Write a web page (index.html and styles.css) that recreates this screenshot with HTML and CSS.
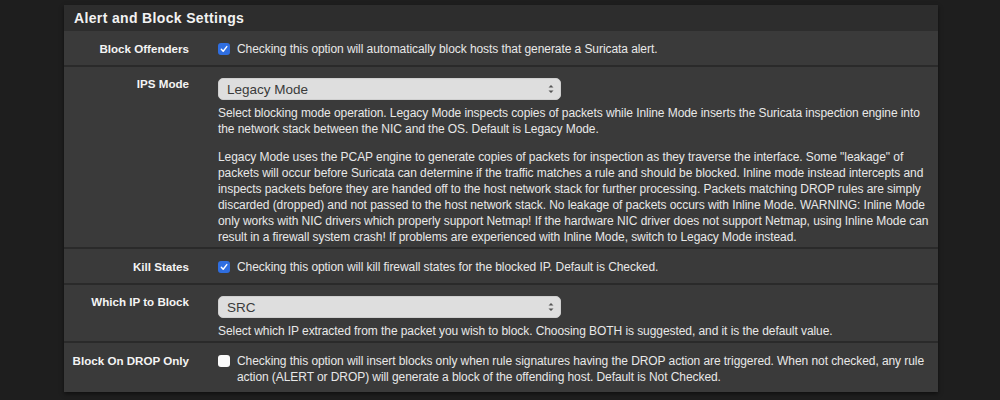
FILE: index.html
```html
<!DOCTYPE html>
<html>
<head>
<meta charset="utf-8">
<link rel="stylesheet" href="styles.css">
</head>
<body>
<div class="panel">
  <div class="panel-heading">Alert and Block Settings</div>
  <div class="row">
    <div class="label">Block Offenders</div>
    <div class="control">
      <label class="check"><span class="box on"><svg viewBox="0 0 12 12" width="12" height="12"><path d="M3.3 6.3 L5.2 8.3 L8.8 3.6" fill="none" stroke="#fff" stroke-width="1.4" stroke-linecap="round" stroke-linejoin="round"/></svg></span><span>Checking this option will automatically block hosts that generate a Suricata alert.</span></label>
    </div>
  </div>
  <div class="row row-select">
    <div class="label">IPS Mode</div>
    <div class="control">
      <div class="select-wrap">
        <select class="select"><option>Legacy Mode</option></select>
        <svg class="arrows" viewBox="0 0 8 12" width="8" height="12"><path d="M1.5 4.5 L4 2 L6.5 4.5 Z M1.5 7.5 L4 10 L6.5 7.5 Z" fill="#555"/></svg>
      </div>
      <p class="help">Select blocking mode operation. Legacy Mode inspects copies of packets while Inline Mode inserts the Suricata inspection engine into the network stack between the NIC and the OS. Default is Legacy Mode.</p>
      <p class="help para">Legacy Mode uses the PCAP engine to generate copies of packets for inspection as they traverse the interface. Some "leakage" of packets will occur before Suricata can determine if the traffic matches a rule and should be blocked. Inline mode instead intercepts and inspects packets before they are handed off to the host network stack for further processing. Packets matching DROP rules are simply discarded (dropped) and not passed to the host network stack. No leakage of packets occurs with Inline Mode. WARNING: Inline Mode only works with NIC drivers which properly support Netmap! If the hardware NIC driver does not support Netmap, using Inline Mode can result in a firewall system crash! If problems are experienced with Inline Mode, switch to Legacy Mode instead.</p>
    </div>
  </div>
  <div class="row">
    <div class="label">Kill States</div>
    <div class="control">
      <label class="check"><span class="box on"><svg viewBox="0 0 12 12" width="12" height="12"><path d="M3.3 6.3 L5.2 8.3 L8.8 3.6" fill="none" stroke="#fff" stroke-width="1.4" stroke-linecap="round" stroke-linejoin="round"/></svg></span><span>Checking this option will kill firewall states for the blocked IP. Default is Checked.</span></label>
    </div>
  </div>
  <div class="row row-select">
    <div class="label">Which IP to Block</div>
    <div class="control">
      <div class="select-wrap">
        <select class="select"><option>SRC</option></select>
        <svg class="arrows" viewBox="0 0 8 12" width="8" height="12"><path d="M1.5 4.5 L4 2 L6.5 4.5 Z M1.5 7.5 L4 10 L6.5 7.5 Z" fill="#555"/></svg>
      </div>
      <p class="help">Select which IP extracted from the packet you wish to block. Choosing BOTH is suggested, and it is the default value.</p>
    </div>
  </div>
  <div class="row row-last">
    <div class="label">Block On DROP Only</div>
    <div class="control">
      <label class="check"><span class="box"></span><span>Checking this option will insert blocks only when rule signatures having the DROP action are triggered. When not checked, any rule action (ALERT or DROP) will generate a block of the offending host. Default is Not Checked.</span></label>
    </div>
  </div>
</div>
</body>
</html>
```

FILE: styles.css
```css
* { box-sizing: border-box; }
html, body { margin: 0; padding: 0; }
body {
  background: #1e1e1e;
  font-family: "Liberation Sans", Arial, sans-serif;
  color: #e8e8e8;
  font-size: 12px;
  line-height: 16px;
  width: 1000px;
  height: 400px;
  overflow: hidden;
}
.panel {
  margin: 5px 0 0 64px;
  width: 874px;
  background: #3a3a3a;
  box-shadow: 0 2px 4px rgba(0,0,0,0.5);
}
.panel-heading {
  height: 26px;
  background: #2d2d2d;
  color: #f2f2f2;
  font-size: 14px;
  font-weight: bold;
  letter-spacing: 0.35px;
  line-height: 26px;
  padding-left: 10px;
}
.row {
  display: grid;
  grid-template-columns: 125px 1fr;
  column-gap: 29px;
  padding: 10px 2px 8px 0;
  border-bottom: 2px solid #2a2a2a;
}
.row-select { padding-top: 11px; padding-bottom: 2px; }
.row-last { border-bottom: none; padding-bottom: 7px; }
.label {
  text-align: right;
  font-weight: bold;
  font-size: 11.6px;
  color: #f4f4f4;
}
.row-select .label { margin-top: -2px; }
.control { min-width: 0; letter-spacing: -0.07px; }
.check { display: flex; gap: 7px; align-items: flex-start; }
.box {
  flex: none;
  width: 12px;
  height: 12px;
  margin-top: 2px;
  border-radius: 3px;
  background: #fbfbfb;
  display: block;
}
.box.on { background: #2f6ee0; }
.box svg { display: block; }
.select-wrap {
  position: relative;
  width: 343px;
  height: 22px;
}
.select {
  appearance: none;
  -webkit-appearance: none;
  width: 100%;
  height: 22px;
  border: 1px solid #cfcfcf;
  border-radius: 5px;
  background: #dedede;
  color: #3a3a3a;
  font-family: "Liberation Sans", Arial, sans-serif;
  font-size: 13.5px;
  padding: 0 0 0 8px;
  margin: 0;
  outline: none;
}
.arrows {
  position: absolute;
  right: 6px;
  top: 5px;
}
.help { margin: 5px 0 0 0; }
.help.para { margin-top: 12px; }
```
